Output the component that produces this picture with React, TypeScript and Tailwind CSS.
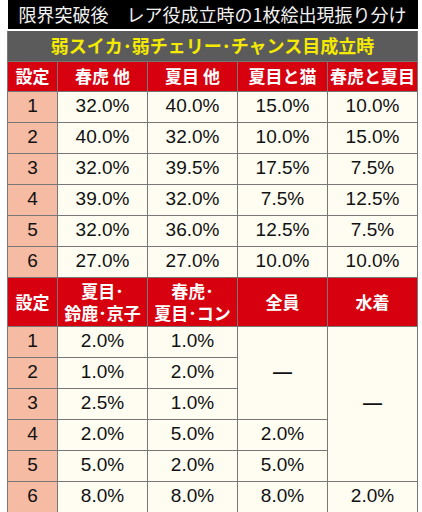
const jp = "font-['Noto_Sans_CJK_JP','Noto_Sans',sans-serif]"
const num = "font-['Liberation_Sans','Arial',sans-serif]"

const upper = [
  ["1", "32.0%", "40.0%", "15.0%", "10.0%"],
  ["2", "40.0%", "32.0%", "10.0%", "15.0%"],
  ["3", "32.0%", "39.5%", "17.5%", "7.5%"],
  ["4", "39.0%", "32.0%", "7.5%", "12.5%"],
  ["5", "32.0%", "36.0%", "12.5%", "7.5%"],
  ["6", "27.0%", "27.0%", "10.0%", "10.0%"],
]

const lower = [
  ["1", "2.0%", "1.0%"],
  ["2", "1.0%", "2.0%"],
  ["3", "2.5%", "1.0%"],
  ["4", "2.0%", "5.0%", "2.0%"],
  ["5", "5.0%", "2.0%", "5.0%"],
  ["6", "8.0%", "8.0%", "8.0%", "2.0%"],
]

const cell = "border border-[#777] text-center align-middle p-0"
const head = `${cell} bg-[#d7000f] text-white font-bold text-[17px] leading-[22px] ${jp}`
const setting = `${cell} bg-[#f5bba3] text-[#111] text-[19px] ${num}`
const data = `${cell} bg-[#fffdf1] text-[#111] text-[19px] ${num}`

export default function App() {
  return (
    <div className="bg-white w-[422px] h-[512px] overflow-hidden pl-[7px]">
      <table className="w-[410px] border-collapse table-fixed">
        <colgroup>
          <col className="w-[50px]" />
          <col className="w-[90px]" />
          <col className="w-[90px]" />
          <col className="w-[90px]" />
          <col className="w-[90px]" />
        </colgroup>
        <tbody>
          <tr className="h-[30px]">
            <td colSpan={5} className={`bg-black text-[#f2f2f2] text-[18px] text-center border-b-2 border-white ${jp}`}>
              限界突破後　レア役成立時の1枚絵出現振り分け
            </td>
          </tr>
          <tr className="h-[31px]">
            <td colSpan={5} className={`bg-[#5b5b5b] text-[#f4ea00] font-bold text-[18px] text-center border border-[#777] ${jp}`}>
              弱スイカ･弱チェリー･チャンス目成立時
            </td>
          </tr>
          <tr className="h-[30px]">
            <td className={head}>設定</td>
            <td className={head}>春虎 他</td>
            <td className={head}>夏目 他</td>
            <td className={head}>夏目と猫</td>
            <td className={head}>春虎と夏目</td>
          </tr>
          {upper.map((r) => (
            <tr key={r[0]} className="h-[31px]">
              <td className={setting}>{r[0]}</td>
              {r.slice(1).map((v, i) => (
                <td key={i} className={data}>{v}</td>
              ))}
            </tr>
          ))}
          <tr className="h-[49px]">
            <td className={head}>設定</td>
            <td className={head}>夏目･<br />鈴鹿･京子</td>
            <td className={head}>春虎･<br />夏目･コン</td>
            <td className={head}>全員</td>
            <td className={head}>水着</td>
          </tr>
          {lower.map((r, idx) => (
            <tr key={r[0]} className="h-[31px]">
              <td className={setting}>{r[0]}</td>
              <td className={data}>{r[1]}</td>
              <td className={data}>{r[2]}</td>
              {idx === 0 && (
                <td rowSpan={3} className={`${data} font-bold`}>—</td>
              )}
              {idx >= 3 && <td className={data}>{r[3]}</td>}
              {idx === 0 && (
                <td rowSpan={5} className={`${data} font-bold`}>—</td>
              )}
              {idx === 5 && <td className={data}>{r[4]}</td>}
            </tr>
          ))}
        </tbody>
      </table>
    </div>
  )
}
